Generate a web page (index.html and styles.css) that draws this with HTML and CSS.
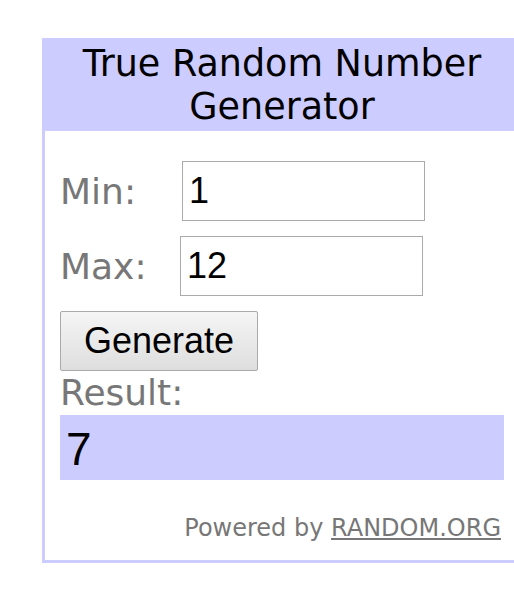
FILE: index.html
```html
<!DOCTYPE html>
<html lang="en">
<head>
    <meta charset="UTF-8">
    <meta name="viewport" content="width=device-width, initial-scale=1.0">
    <title>True Random Number Generator</title>
    <link rel="stylesheet" href="styles.css">
</head>
<body>

<div class="widget">
    <header class="widget-header">
        <h1>True Random Number<br>Generator</h1>
    </header>

    <form class="widget-body" onsubmit="return false;">
        <div class="field">
            <label for="min">Min:</label>
            <input type="text" id="min" class="shift" value="1">
        </div>
        <div class="field">
            <label for="max">Max:</label>
            <input type="text" id="max" value="12">
        </div>
        <button type="submit" class="generate">Generate</button>
        <div class="result-label">Result:</div>
        <div class="result">7</div>
        <p class="powered">Powered by <a href="#">RANDOM.ORG</a></p>
    </form>
</div>

</body>
</html>
```

FILE: styles.css
```css
body {
    margin: 0;
    padding: 0;
    background-color: #fff;
    overflow: hidden;
    font-family: "DejaVu Sans", Verdana, sans-serif;
}
.widget {
    margin: 38px 0 0 42px;
    width: 474px;
    border: 3px solid #ccccff;
}
.widget-header {
    background-color: #ccccff;
    padding: 1px 0 3px;
    text-align: center;
}
.widget-header h1 {
    margin: 0;
    font-size: 36.5px;
    font-weight: normal;
    line-height: 43px;
    color: #000;
}
.widget-body {
    padding: 30px 15px 0;
}
.field {
    display: flex;
    align-items: center;
    margin-bottom: 15px;
}
.field label {
    width: 120px;
    font-size: 36px;
    color: #777;
}
.field input {
    box-sizing: border-box;
    width: 243px;
    height: 60px;
    margin: 0;
    padding: 0 6px;
    border: 1px solid #aaa;
    font-family: "Liberation Sans", Arial, sans-serif;
    font-size: 36px;
    color: #000;
}
.field input.shift {
    margin-left: 2px;
}
.generate {
    display: block;
    box-sizing: border-box;
    width: 198px;
    height: 60px;
    margin: 0;
    padding: 0;
    border: 1px solid #aaa;
    border-radius: 2px;
    background: linear-gradient(#f5f5f5, #dedede);
    font-family: "Liberation Sans", Arial, sans-serif;
    font-size: 36px;
    color: #000;
}
.result-label {
    font-size: 36px;
    line-height: 44px;
    color: #777;
}
.result {
    height: 65px;
    padding-left: 6px;
    background-color: #ccccff;
    font-family: "Liberation Sans", Arial, sans-serif;
    font-size: 46px;
    line-height: 68px;
    color: #000;
}
.powered {
    margin: 0;
    padding: 31px 3px 15px 0;
    text-align: right;
    font-size: 24px;
    line-height: 34px;
    color: #777;
}
.powered a {
    color: #777;
}
```
